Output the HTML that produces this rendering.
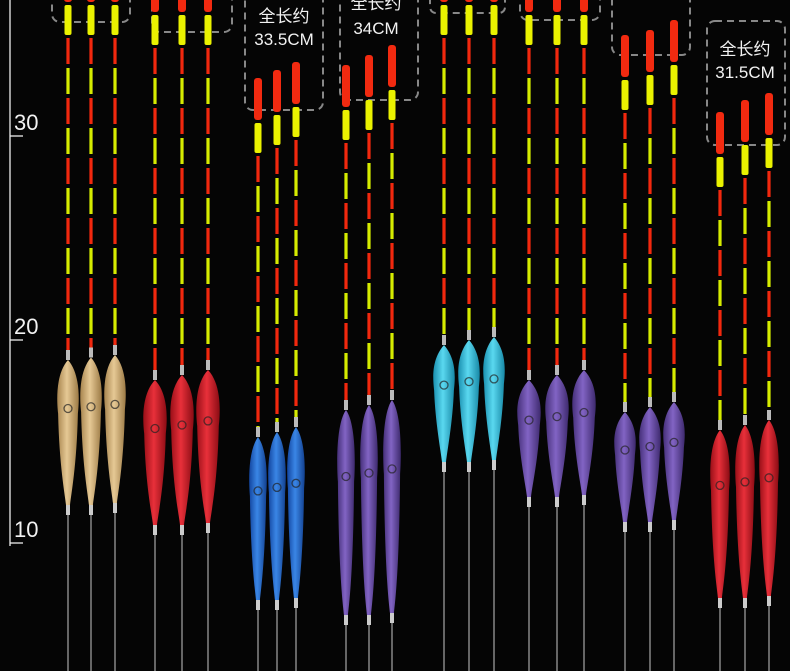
<!DOCTYPE html>
<html><head><meta charset="utf-8"><style>
html,body{margin:0;padding:0;background:#050505;width:790px;height:671px;overflow:hidden}
svg{display:block}
text{font-family:"Liberation Sans","Noto Sans CJK SC",sans-serif;fill:#f2f2f2}
</style></head><body>
<svg id="s" width="790" height="671" viewBox="0 0 790 671" xmlns="http://www.w3.org/2000/svg">
<defs>
<linearGradient id="gw" x1="0" x2="1"><stop offset="0" stop-color="#a8854f"/><stop offset=".45" stop-color="#e6c995"/><stop offset="1" stop-color="#9c7a45"/></linearGradient>
<linearGradient id="gr" x1="0" x2="1"><stop offset="0" stop-color="#9a0f18"/><stop offset=".45" stop-color="#e8303a"/><stop offset="1" stop-color="#8a0c14"/></linearGradient>
<linearGradient id="gb" x1="0" x2="1"><stop offset="0" stop-color="#1346a0"/><stop offset=".45" stop-color="#3a86e6"/><stop offset="1" stop-color="#12408f"/></linearGradient>
<linearGradient id="gp" x1="0" x2="1"><stop offset="0" stop-color="#46307a"/><stop offset=".45" stop-color="#8264c4"/><stop offset="1" stop-color="#3e2a6e"/></linearGradient>
<linearGradient id="gc" x1="0" x2="1"><stop offset="0" stop-color="#1a90b0"/><stop offset=".45" stop-color="#5ad8f0"/><stop offset="1" stop-color="#1788a6"/></linearGradient>
</defs>
<g stroke="#eee" stroke-width="1.3">
<line x1="10" y1="0" x2="10" y2="546"/>
<line x1="10" y1="136" x2="23" y2="136"/>
<line x1="10" y1="340" x2="23" y2="340"/>
<line x1="10" y1="543" x2="23" y2="543"/>
</g>
<text x="14" y="130" font-size="22">30</text>
<text x="14" y="334" font-size="22">20</text>
<text x="14" y="537" font-size="22">10</text>
<g fill="none" stroke="#888" stroke-width="2" stroke-dasharray="7 5">
<rect x="52" y="-10" width="78" height="32" rx="8"/>
<rect x="152" y="-10" width="80" height="42" rx="8"/>
<rect x="245" y="-10" width="78" height="120" rx="8"/>
<rect x="340" y="-10" width="78" height="110" rx="8"/>
<rect x="430" y="-10" width="75" height="23" rx="6"/>
<rect x="520" y="-10" width="80" height="30" rx="8"/>
<rect x="612" y="-10" width="78" height="65" rx="8"/>
<rect x="707" y="21" width="78" height="124" rx="8"/>
</g>
<text x="284" y="22" font-size="17" text-anchor="middle">全长约</text>
<text x="284" y="45" font-size="17" text-anchor="middle">33.5CM</text>
<text x="376" y="9" font-size="17" text-anchor="middle">全长约</text>
<text x="376" y="34" font-size="17" text-anchor="middle">34CM</text>
<text x="745" y="55" font-size="17" text-anchor="middle">全长约</text>
<text x="745" y="78" font-size="17" text-anchor="middle">31.5CM</text>
<g id="f"></g>
</svg>
<script>
var G=[
 [[68,91,115],[-40,-40,-40],360,505,22,'gw'],
 [[155,182,208],[-30,-30,-30],380,525,24,'gr'],
 [[258,277,296],[78,70,62],437,600,18,'gb'],
 [[346,369,392],[65,55,45],410,615,18,'gp'],
 [[444,469,494],[-40,-40,-40],345,462,22,'gc'],
 [[529,557,584],[-30,-30,-30],380,497,24,'gp'],
 [[625,650,674],[35,30,20],412,522,22,'gp'],
 [[720,745,769],[112,100,93],430,598,20,'gr']];
var h='';
G.forEach(function(g){g[0].forEach(function(x,i){
 var t=g[1][i],bt=g[2]+(i==1?-5:(i==2?-10:0))*(g[5]=='gw'?0.5:1),bb=g[3]+(i==2?-2:0),w=g[4];
 if(g[5]=='gc'){bt=g[2]+[0,-5,-8][i];}
 h+='<line x1="'+x+'" y1="'+bb+'" x2="'+x+'" y2="671" stroke="#666" stroke-width="2"/>';
 h+='<rect x="'+(x-4)+'" y="'+t+'" width="8" height="42" rx="3" fill="#f22a10"/>';
 h+='<rect x="'+(x-3.5)+'" y="'+(t+45)+'" width="7" height="30" rx="2" fill="#eaf200"/>';
 var y=t+78,c=0;
 while(y<bt-8){var e=Math.min(y+26,bt-8);h+='<rect x="'+(x-1.6)+'" y="'+y+'" width="3.2" height="'+(e-y)+'" fill="'+(c%2?'#d6ec00':'#f2280e')+'"/>';y=e+4;c++;}
 h+='<rect x="'+(x-2)+'" y="'+(bt-10)+'" width="4" height="10" fill="#bbb"/>';
 var m=bt+(bb-bt)*0.3;
 h+='<path d="M'+x+' '+bt+' C'+(x+w*0.6)+' '+(bt+15)+' '+(x+w*0.5)+' '+m+' '+(x+w*0.45)+' '+(m+10)+' C'+(x+w*0.4)+' '+(bb-40)+' '+(x+3)+' '+(bb-10)+' '+(x+2)+' '+bb+' L'+(x-2)+' '+bb+' C'+(x-3)+' '+(bb-10)+' '+(x-w*0.4)+' '+(bb-40)+' '+(x-w*0.45)+' '+(m+10)+' C'+(x-w*0.5)+' '+m+' '+(x-w*0.6)+' '+(bt+15)+' '+x+' '+bt+'Z" fill="url(#'+g[5]+')"/>';
 h+='<rect x="'+(x-2)+'" y="'+bb+'" width="4" height="10" fill="#ccc"/>';
 h+='<circle cx="'+x+'" cy="'+(m+5)+'" r="4" fill="none" stroke="#222" stroke-width="1.3" opacity=".7"/>';
});});
document.getElementById('f').innerHTML=h;
</script>
</body></html>
